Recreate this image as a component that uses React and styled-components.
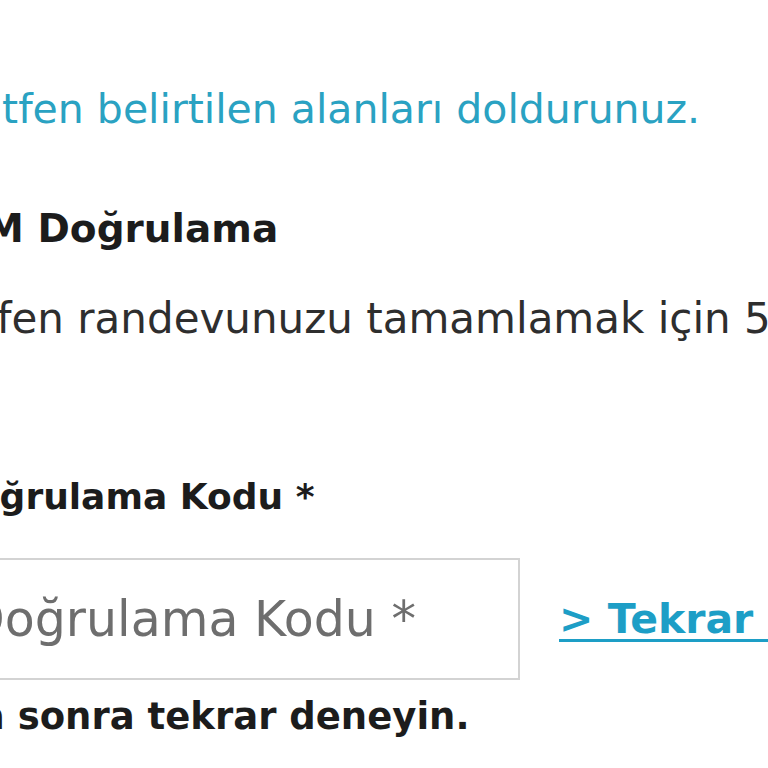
import React from 'react';
import styled, { createGlobalStyle } from 'styled-components';

const Global = createGlobalStyle`
  html, body {
    margin: 0;
    padding: 0;
    background: #fff;
    overflow: hidden;
  }
  body {
    font-family: "DejaVu Sans", "Liberation Sans", sans-serif;
  }
`;

const Viewport = styled.div`
  width: 768px;
  height: 768px;
  overflow: hidden;
`;

const Form = styled.div`
  padding-top: 79px;
  white-space: nowrap;
`;

const Line = styled.div`
  margin-left: ${p => p.$shift || 0}px;
  margin-bottom: ${p => p.$gap || 0}px;
  height: 60px;
  font-size: ${p => p.$size || 41}px;
  line-height: 60px;
  font-weight: ${p => (p.$bold ? 700 : 400)};
  color: ${p => p.$color || '#2e2e2e'};
`;

const Row = styled.div`
  display: flex;
  align-items: center;
  gap: 39px;
  margin-left: -55px;
  margin-bottom: 7px;
`;

const Input = styled.input`
  box-sizing: border-box;
  flex: none;
  width: 575px;
  height: 122px;
  padding: 0 0 0 20px;
  border: 2px solid #d3d3d3;
  border-radius: 0;
  outline: none;
  background: #fff;
  font-family: "DejaVu Sans", "Liberation Sans", sans-serif;
  font-size: 49px;
  color: #333;

  &::placeholder {
    color: #6e6e6e;
    opacity: 1;
  }
`;

const Resend = styled.a`
  font-size: 41px;
  font-weight: 700;
  color: #1d9ec6;
  text-decoration: underline;
  text-underline-offset: 6px;
  text-decoration-thickness: 3px;
  cursor: pointer;
`;

export default function App() {
  return (
    <Viewport>
      <Global />
      <Form>
        <Line $shift={-46} $gap={60} $color="#2aa2c2">Lütfen belirtilen alanları doldurunuz.</Line>
        <Line $shift={-75} $gap={30} $size={39} $bold $color="#1c1c1c">GSM Doğrulama</Line>
        <Line $shift={-69} $gap={118} $size={42}>Lütfen randevunuzu tamamlamak için 5 dakika içinde gönderilen kodu giriniz.</Line>
        <Line $shift={-55} $gap={31} $size={36} $bold $color="#1c1c1c">Doğrulama Kodu *</Line>
        <Row>
          <Input placeholder="Doğrulama Kodu *" />
          <Resend>&gt; Tekrar Gönder</Resend>
        </Row>
        <Line $shift={-246} $size={37} $bold $color="#1c1c1c">Lütfen daha sonra tekrar deneyin.</Line>
      </Form>
    </Viewport>
  );
}
